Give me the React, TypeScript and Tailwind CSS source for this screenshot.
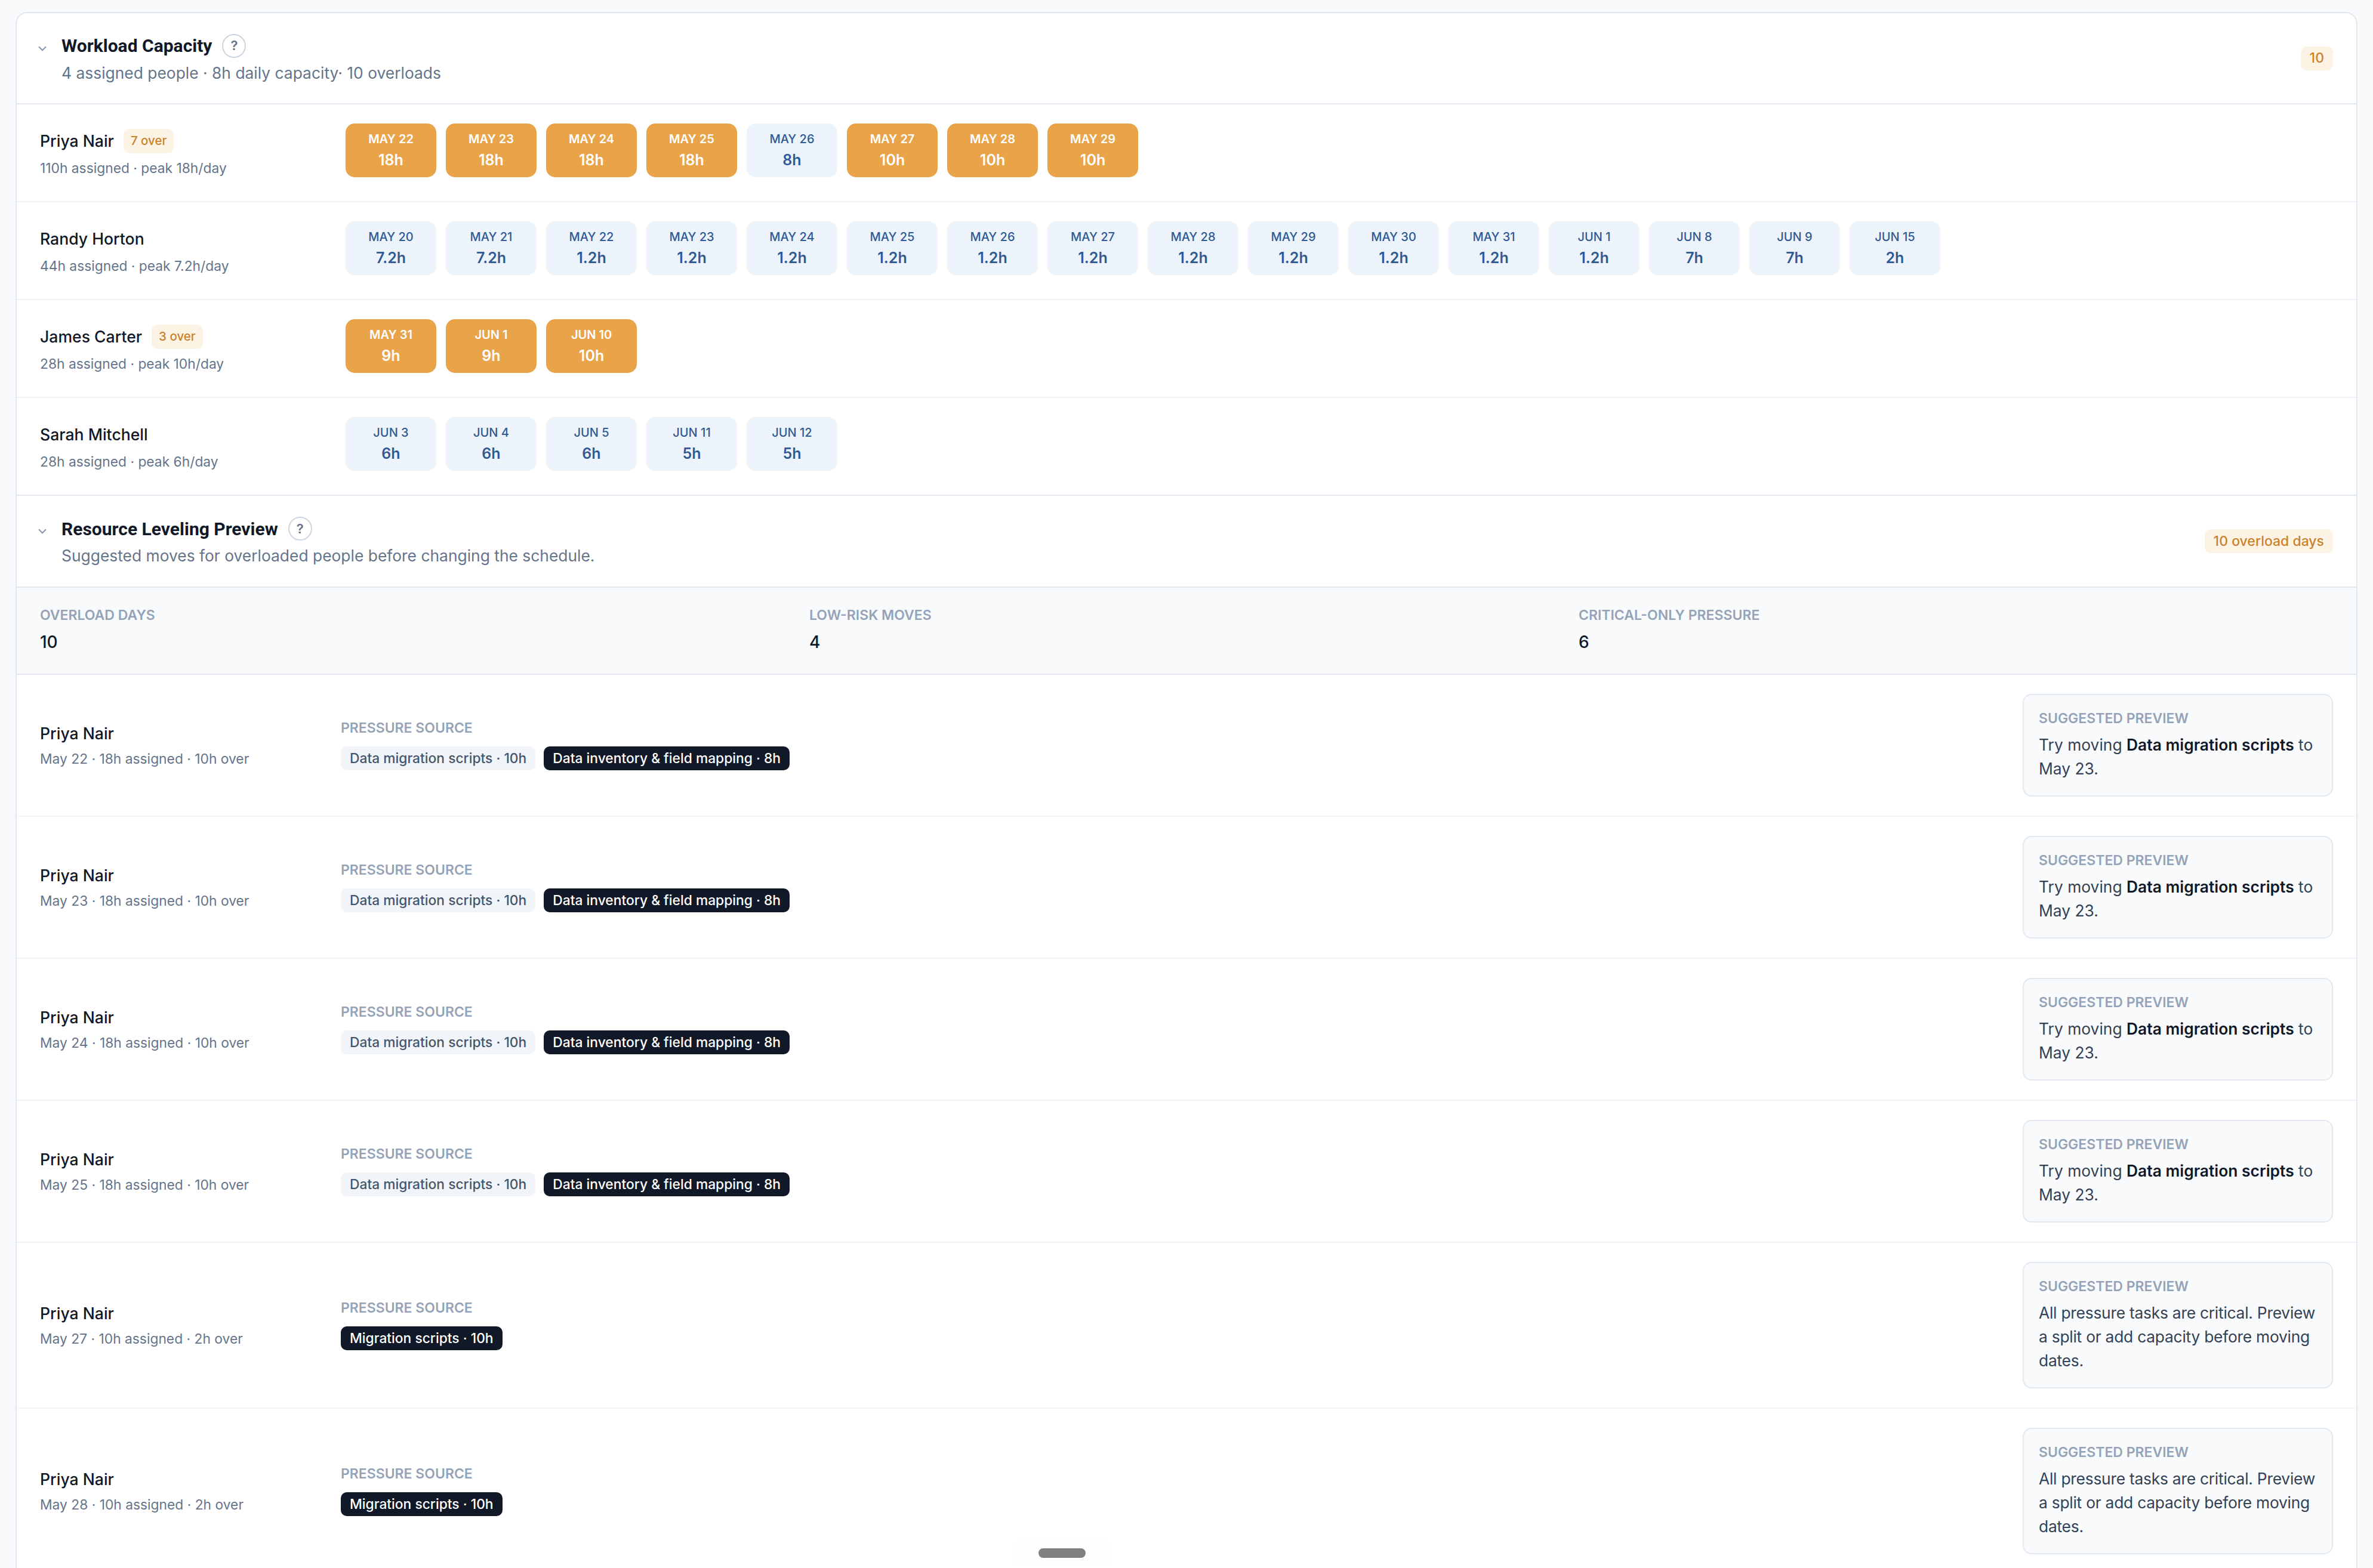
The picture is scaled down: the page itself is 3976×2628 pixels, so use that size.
import type { ReactNode } from "react";

type Day = { date: string; hours: string };

const people: { name: string; over?: string; meta: string; hot: boolean; days: [string, string, boolean?][] }[] = [
  {
    name: "Priya Nair",
    over: "7 over",
    meta: "110h assigned · peak 18h/day",
    hot: true,
    days: [
      ["May 22", "18h"],
      ["May 23", "18h"],
      ["May 24", "18h"],
      ["May 25", "18h"],
      ["May 26", "8h", true],
      ["May 27", "10h"],
      ["May 28", "10h"],
      ["May 29", "10h"],
    ],
  },
  {
    name: "Randy Horton",
    meta: "44h assigned · peak 7.2h/day",
    hot: false,
    days: [
      ["May 20", "7.2h"],
      ["May 21", "7.2h"],
      ["May 22", "1.2h"],
      ["May 23", "1.2h"],
      ["May 24", "1.2h"],
      ["May 25", "1.2h"],
      ["May 26", "1.2h"],
      ["May 27", "1.2h"],
      ["May 28", "1.2h"],
      ["May 29", "1.2h"],
      ["May 30", "1.2h"],
      ["May 31", "1.2h"],
      ["Jun 1", "1.2h"],
      ["Jun 8", "7h"],
      ["Jun 9", "7h"],
      ["Jun 15", "2h"],
    ],
  },
  {
    name: "James Carter",
    over: "3 over",
    meta: "28h assigned · peak 10h/day",
    hot: true,
    days: [
      ["May 31", "9h"],
      ["Jun 1", "9h"],
      ["Jun 10", "10h"],
    ],
  },
  {
    name: "Sarah Mitchell",
    meta: "28h assigned · peak 6h/day",
    hot: false,
    days: [
      ["Jun 3", "6h"],
      ["Jun 4", "6h"],
      ["Jun 5", "6h"],
      ["Jun 11", "5h"],
      ["Jun 12", "5h"],
    ],
  },
];

const stats = [
  ["Overload days", "10"],
  ["Low-risk moves", "4"],
  ["Critical-only pressure", "6"],
];

const critical = "All pressure tasks are critical. Preview a split or add capacity before moving dates.";

const moves = [
  { meta: "May 22 · 18h assigned · 10h over", split: true },
  { meta: "May 23 · 18h assigned · 10h over", split: true },
  { meta: "May 24 · 18h assigned · 10h over", split: true },
  { meta: "May 25 · 18h assigned · 10h over", split: true },
  { meta: "May 27 · 10h assigned · 2h over", split: false },
  { meta: "May 28 · 10h assigned · 2h over", split: false },
];

function Chevron() {
  return (
    <svg width="14" height="9" viewBox="0 0 14 9" fill="none" className="mt-[20px] -ml-[3px] mr-[25px] shrink-0">
      <path d="M1 1.2 7 7.2l6-6" stroke="#8a99b0" strokeWidth="2.2" />
    </svg>
  );
}

function Badge({ children }: { children: ReactNode }) {
  return (
    <span className="inline-flex h-[40px] items-center rounded-[10px] bg-[#fdf3e5] px-[15px] text-[23px] font-medium text-[#c9822c]">
      {children}
    </span>
  );
}

function SectionHeader({ title, sub, badge, first }: { title: string; sub: string; badge: string; first?: boolean }) {
  return (
    <div
      className={
        first
          ? "flex h-[153px] items-center justify-between border-b-2 border-[#e2e8f0] px-[39px]"
          : "flex h-[154px] items-center justify-between border-b-2 border-[#e2e8f0] px-[39px]"
      }
    >
      <div className="flex items-start pt-[3px]">
        <Chevron />
        <div>
          <div className="flex h-[40px] items-center gap-[17px]">
            <h2 className="font-[Roboto,sans-serif] text-[30px] font-bold text-[#111827]">{title}</h2>
            <span className="flex h-[40px] w-[40px] items-center justify-center rounded-full border-2 border-[#cbd5e1] text-[22px] font-semibold text-[#64748b]">
              ?
            </span>
          </div>
          <p className="mt-[5px] text-[26.4px] leading-[40px] text-[#64748b]">{sub}</p>
        </div>
      </div>
      <Badge>{badge}</Badge>
    </div>
  );
}

function DayChip({ day, hot }: { day: Day; hot: boolean }) {
  return (
    <div
      className={
        hot
          ? "flex h-[90px] w-[152px] flex-col items-center justify-center rounded-[15px] bg-[#e9a44a] text-white"
          : "flex h-[90px] w-[152px] flex-col items-center justify-center rounded-[15px] bg-[#edf3fb] text-[#2f5a94]"
      }
    >
      <span className={hot ? "text-[20px] leading-[30px] font-semibold uppercase" : "text-[20px] leading-[30px] font-medium uppercase"}>
        {day.date}
      </span>
      <span className="mt-[2px] text-[25px] leading-[36px] font-semibold">{day.hours}</span>
    </div>
  );
}

function Tag({ dark, children }: { dark?: boolean; children: ReactNode }) {
  return (
    <span
      className={
        dark
          ? "inline-flex h-[40px] items-center rounded-[10px] bg-[#111827] px-[15px] text-[22.8px] font-medium text-white"
          : "inline-flex h-[40px] items-center rounded-[10px] bg-[#f1f5f9] px-[15px] text-[22.8px] font-medium text-[#475569]"
      }
    >
      {children}
    </span>
  );
}

export default function App() {
  return (
    <div className="relative h-[2628px] overflow-hidden bg-[#f8fafc] px-[26px] pt-[20px] font-[Inter,sans-serif]">
      <div className="rounded-t-[20px] border-2 border-[#e2e8f0] bg-white">
        <SectionHeader first title="Workload Capacity" sub="4 assigned people · 8h daily capacity· 10 overloads" badge="10" />

        {people.map((p, i) => (
          <div
            key={p.name}
            className={
              i === people.length - 1
                ? "flex h-[164px] items-center border-b-2 border-[#e2e8f0] px-[39px]"
                : "flex h-[164px] items-center border-b-2 border-[#f1f5f9] px-[39px]"
            }
          >
            <div className="w-[512px] shrink-0 pt-[4px]">
              <div className="flex h-[41px] items-center gap-[16px]">
                <span className="text-[26.6px] font-medium text-[#111827]">{p.name}</span>
                {p.over && (
                  <span className="inline-flex h-[41px] items-center rounded-[10px] bg-[#fdf3e5] px-[12px] text-[20.5px] font-medium text-[#c9822c]">
                    {p.over}
                  </span>
                )}
              </div>
              <p className="mt-[7px] text-[22.8px] leading-[36px] text-[#64748b]">{p.meta}</p>
            </div>
            <div className="mb-[8px] flex gap-[16px]">
              {p.days.map(([date, hours, cool]) => (
                <DayChip key={date} day={{ date, hours }} hot={p.hot && !cool} />
              ))}
            </div>
          </div>
        ))}

        <SectionHeader title="Resource Leveling Preview" sub="Suggested moves for overloaded people before changing the schedule." badge="10 overload days" />

        <div className="grid h-[146px] grid-cols-3 content-center gap-x-[25px] border-b-2 border-[#e2e8f0] bg-[#f8fafc] px-[39px] pb-[4px]">
          {stats.map(([label, value]) => (
            <div key={label}>
              <p className="text-[23px] leading-[34px] font-semibold text-[#94a3b8] uppercase">{label}</p>
              <p className="mt-[8px] text-[28px] leading-[40px] font-medium text-[#111827]">{value}</p>
            </div>
          ))}
        </div>

        {moves.map((m) => (
          <div key={m.meta} className="flex items-center border-b-2 border-[#f1f5f9] px-[39px] py-[32px]">
            <div className="w-[504px] shrink-0">
              <p className="text-[26.6px] leading-[40px] font-medium text-[#111827]">Priya Nair</p>
              <p className="mt-[5px] text-[22.8px] leading-[36px] text-[#64748b]">{m.meta}</p>
            </div>
            <div className="flex-1 pb-[4px]">
              <p className="text-[23px] leading-[34px] font-semibold text-[#94a3b8] uppercase">Pressure source</p>
              <div className="mt-[14px] flex gap-[14px]">
                {m.split ? (
                  <>
                    <Tag>Data migration scripts · 10h</Tag>
                    <Tag dark>Data inventory &amp; field mapping · 8h</Tag>
                  </>
                ) : (
                  <Tag dark>Migration scripts · 10h</Tag>
                )}
              </div>
            </div>
            <div className="w-[520px] shrink-0 rounded-[15px] border-2 border-[#e2e8f0] bg-[#f8fafc] px-[25px] pt-[22px] pb-[25px]">
              <p className="text-[23px] leading-[34px] font-semibold text-[#94a3b8] uppercase">Suggested preview</p>
              <p className="mt-[7px] text-[26.4px] leading-[40px] text-[#334155]">
                {m.split ? (
                  <>
                    Try moving <strong className="font-semibold text-[#111827]">Data migration scripts</strong> to May 23.
                  </>
                ) : (
                  <span className="tracking-[-0.25px]">{critical}</span>
                )}
              </p>
            </div>
          </div>
        ))}
      </div>

      <div className="absolute bottom-[5px] left-[1702px] flex h-[40px] w-[155px] items-center justify-center bg-[#fdfdfd]">
        <div className="h-[16px] w-[79px] rounded-full bg-[#808080]" />
      </div>
    </div>
  );
}
